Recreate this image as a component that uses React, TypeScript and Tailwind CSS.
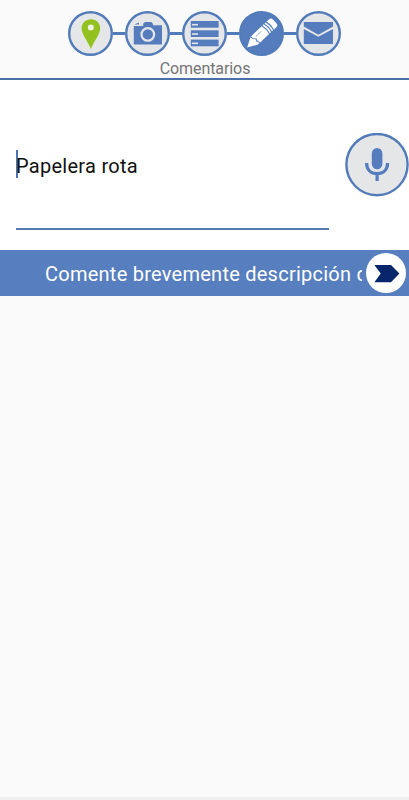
import React from 'react';

interface StepProps {
  active?: boolean;
  children: React.ReactNode;
}

const Step: React.FC<StepProps> = ({ active, children }) => (
  <svg viewBox="0 0 45 45" className="w-[45px] h-[45px] shrink-0">
    <circle cx="22.5" cy="22.5" r="21.3" fill={active ? '#557dbd' : '#e5e6e8'} stroke="#527bb9" strokeWidth="2.4" />
    {children}
  </svg>
);

const Connector = () => <div className="w-3 h-[3px] shrink-0 bg-[#527bb9]" />;

const Steps = () => (
  <div className="flex items-center justify-center pt-[11px]">
    <Step>
      <path d="M22.9 8.2c-5.2 0-9.3 3.9-9.3 9 0 6.2 6.3 12.7 9.3 20.8 3-8.1 9.3-14.6 9.3-20.8 0-5.1-4.1-9-9.3-9z" fill="#93c11f" />
      <circle cx="22.8" cy="16.5" r="3" fill="#eef1e6" />
    </Step>
    <Connector />
    <Step>
      <path d="M8.8 14.9h9.4V12.3h1.2V11h7.4v1.3H28v1.9h9v19.2H8.8z" fill="#557dbd" />
      <path d="M9.4 13.4l4.6-1.8v1.8z" fill="#557dbd" />
      <circle cx="22.8" cy="23.4" r="6.3" fill="#557dbd" stroke="#e5e6e8" strokeWidth="2.2" />
    </Step>
    <Connector />
    <Step>
      {[10, 19.3, 28.6].map((y) => (
        <g key={y}>
          <rect x="8.8" y={y} width="27.8" height="6.7" fill="#557dbd" />
          <rect x="10" y={y + 2.9} width="6" height="1.6" fill="#e5e6e8" />
        </g>
      ))}
    </Step>
    <Connector />
    <Step active>
      <g transform="translate(8.2 36.4) rotate(-43.5)" fill="#fff">
        <path d="M0 0L9.4-5.2 9.8-1.8 11.8-.5 10.9 1.8 12 5.2H9.4z" />
        <path d="M10.3-5.4H25q1.6 5.4 0 10.8H12.8l-.8-3.4 1-2.4-2.3-1.6z" />
        <path d="M26.2-5.4h1.6q1.6 5.4 0 10.8h-1.6q1.6-5.4 0-10.8zM29-5.4h1.6q1.6 5.4 0 10.8H29q1.6-5.4 0-10.8z" />
        <path d="M31.8-5.4h3.2q2.8 0 2.8 2.8v5.2q0 2.8-2.8 2.8h-3.2q1.6-5.4 0-10.8z" />
        <path d="M14-2H21.5" fill="none" stroke="#557dbd" strokeWidth=".6" />
      </g>
    </Step>
    <Connector />
    <Step>
      <path d="M7.8 11H37v4.6l-14.7 8.1L7.8 15.6z" fill="#557dbd" />
      <path d="M7.8 17.9l14.5 7.9L37 17.9V33H7.8z" fill="#557dbd" />
    </Step>
  </div>
);

const MicButton = () => (
  <button type="button" aria-label="Dictar" className="w-[64px] h-[64px] shrink-0">
    <svg viewBox="0 0 64 64" className="w-[64px] h-[64px]">
      <circle cx="32" cy="31.6" r="30.6" fill="#e5e6e8" stroke="#527bb9" strokeWidth="2.4" />
      <rect x="26.8" y="15" width="10.6" height="21.3" rx="5.3" fill="#557dbd" />
      <path d="M21.6 30c0 6.8 4.4 10.6 10.5 10.6S42.6 36.8 42.6 30M32.1 40v8" fill="none" stroke="#557dbd" strokeWidth="3.2" />
    </svg>
  </button>
);

const HintBar = () => (
  <div className="flex items-center h-[46px] bg-[#577ebe] pl-[45px] pr-[3px]">
    <p className="w-[317px] pt-0.5 shrink-0 overflow-hidden whitespace-nowrap text-[20px] leading-7 tracking-[0.25px] text-white">
      Comente brevemente descripción de la incidencia
    </p>
    <button type="button" aria-label="Siguiente" className="ml-auto w-[40px] h-[40px] shrink-0 rounded-full bg-white">
      <svg viewBox="0 0 40 40" className="w-[40px] h-[40px]">
        <path d="M8.4 12H25l8.4 8.5L25 29.2H8.4l6.3-8.7z" fill="#07266c" />
      </svg>
    </button>
  </div>
);

export default function App() {
  return (
    <div className="flex flex-col w-[409px] h-[800px] overflow-hidden bg-[#fafafa] font-[Roboto,sans-serif]">
      <header className="h-[80px] shrink-0 border-b-2 border-[#4a70aa]">
        <Steps />
        <h1 className="mt-[3px] pl-px text-center text-[16px] leading-5 font-normal tracking-[-0.08px] text-[#757575]">Comentarios</h1>
      </header>

      <main className="flex h-[170px] shrink-0 bg-white">
        <div className="flex flex-col justify-between w-[313px] ml-4 mt-[70px] mb-5 border-b-2 border-[#557bb0]">
          <div className="h-7 border-l-2 border-[#4c74b5]">
            <p className="-ml-0.5 text-[20px] leading-8 tracking-[0.28px] text-[#111]">Papelera rota</p>
          </div>
        </div>
        <div className="ml-4 mt-[53px]">
          <MicButton />
        </div>
      </main>

      <HintBar />
      <div className="mt-auto h-[3px] bg-[#f0f0f0]" />
    </div>
  );
}
